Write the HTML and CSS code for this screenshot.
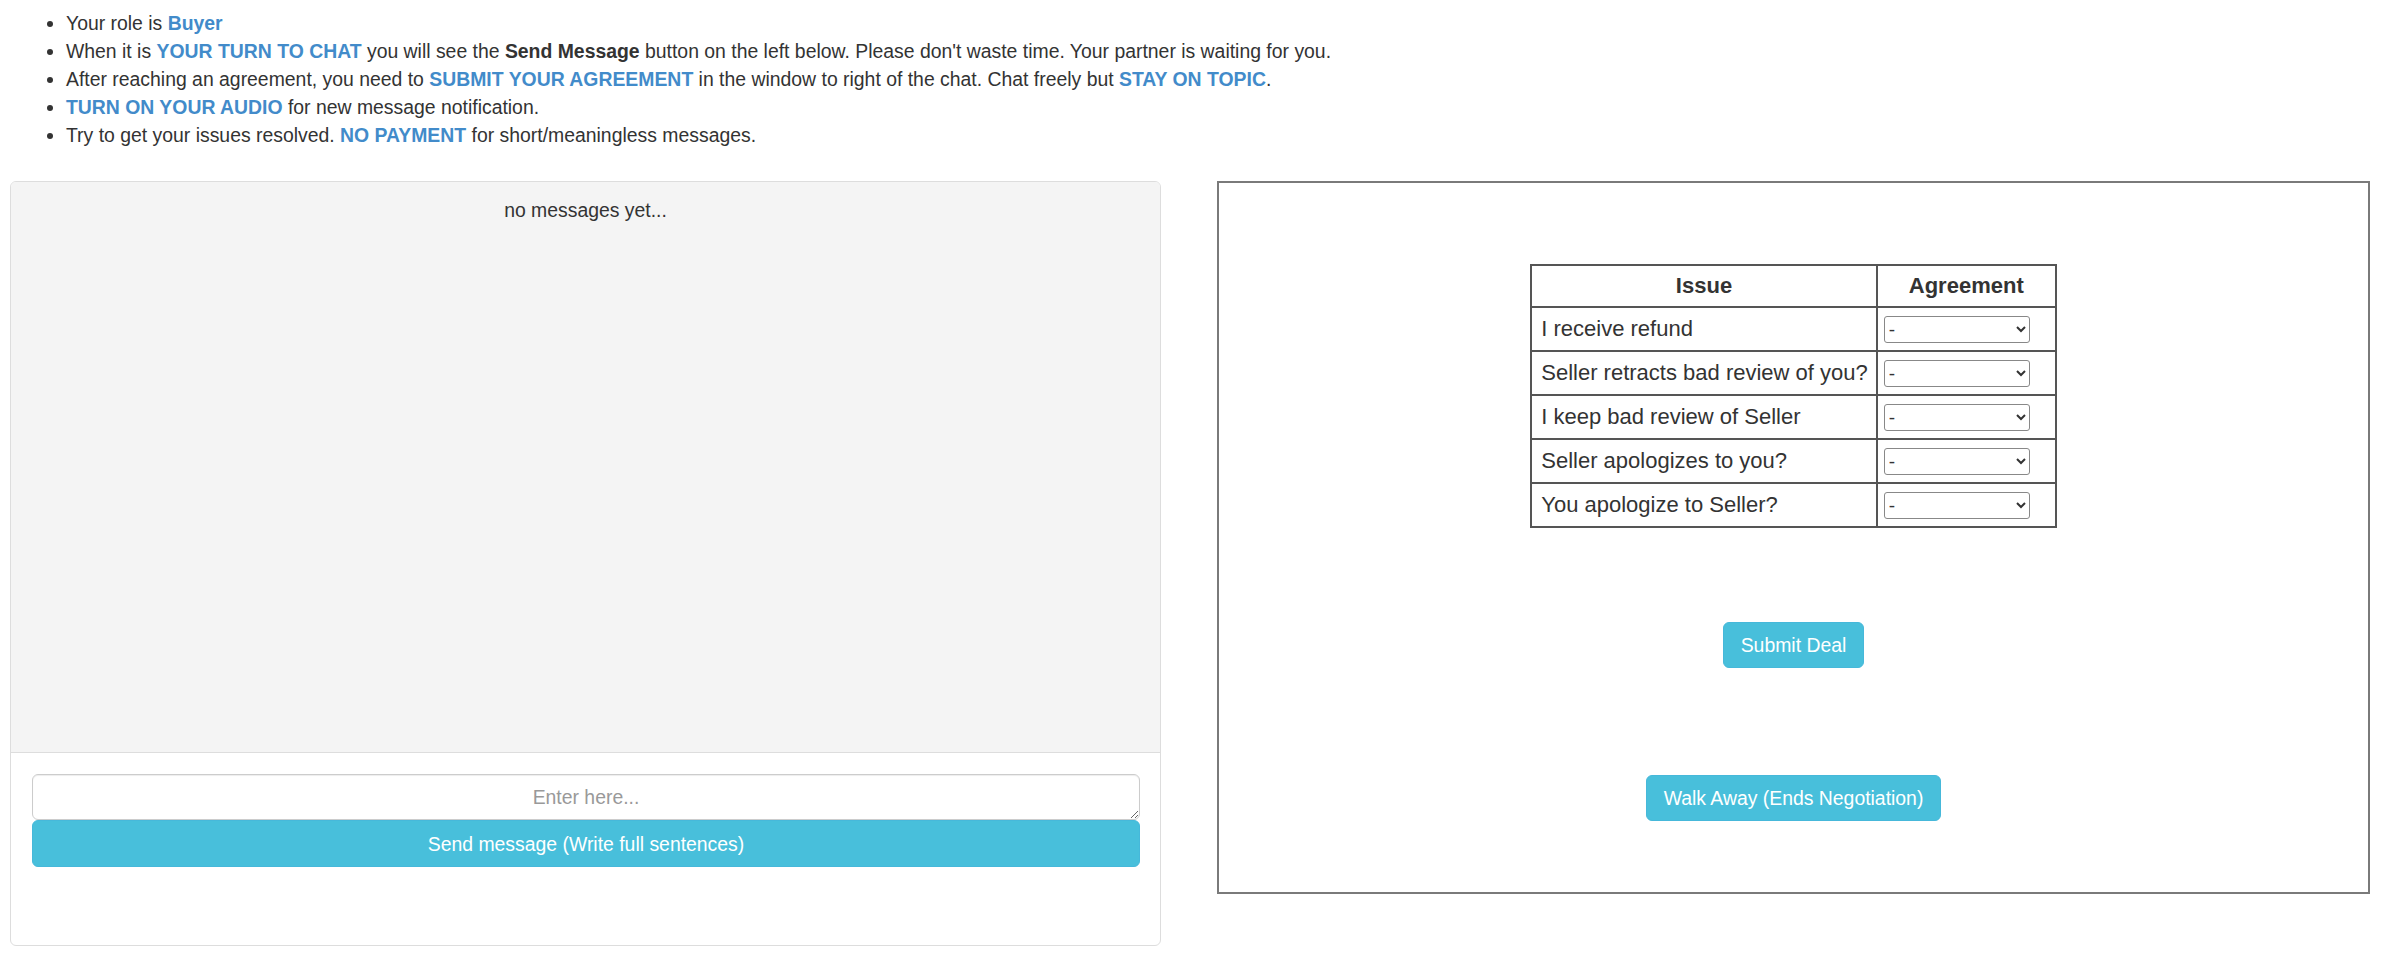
FILE: index.html
```html
<!DOCTYPE html>
<html>
	<head>
		<meta charset="UTF-8">
		<title>Negotiation Chat</title>
		<link rel="stylesheet" href="styles.css">
	</head>
	<body>
		<ul class="rules">
			<li>Your role is <span class="hl">Buyer</span></li>
			<li>When it is <span class="hl">YOUR TURN TO CHAT</span> you will see the <b>Send Message</b> button on the left below. Please don't waste time. Your partner is waiting for you.</li>
			<li>After reaching an agreement, you need to <span class="hl">SUBMIT YOUR AGREEMENT</span> in the window to right of the chat. Chat freely but <span class="hl">STAY ON TOPIC</span>.</li>
			<li><span class="hl">TURN ON YOUR AUDIO</span> for new message notification.</li>
			<li>Try to get your issues resolved. <span class="hl">NO PAYMENT</span> for short/meaningless messages.</li>
		</ul>
		<div class="row">
			<div class="chat">
				<div class="messages">no messages yet...</div>
				<div class="composer">
					<textarea class="entry" placeholder="Enter here..."></textarea>
					<button class="btn btn-wide">Send message (Write full sentences)</button>
				</div>
			</div>
			<div class="deal">
				<table class="issues">
					<tr>
						<th>Issue</th>
						<th class="agree">Agreement</th>
					</tr>
					<tr>
						<td>I receive refund</td>
						<td class="choice"><select><option>-</option></select></td>
					</tr>
					<tr>
						<td>Seller retracts bad review of you?</td>
						<td class="choice"><select><option>-</option></select></td>
					</tr>
					<tr>
						<td>I keep bad review of Seller</td>
						<td class="choice"><select><option>-</option></select></td>
					</tr>
					<tr>
						<td>Seller apologizes to you?</td>
						<td class="choice"><select><option>-</option></select></td>
					</tr>
					<tr>
						<td>You apologize to Seller?</td>
						<td class="choice"><select><option>-</option></select></td>
					</tr>
				</table>
				<div class="submit"><button class="btn">Submit Deal</button></div>
				<div class="walk"><button class="btn">Walk Away (Ends Negotiation)</button></div>
			</div>
		</div>
	</body>
</html>
```

FILE: styles.css
```css
body {
	margin: 0;
	padding: 0 22px 0 10px;
	font-family: "Liberation Sans", Arial, sans-serif;
	font-size: 19.4px;
	line-height: 28px;
	color: #333;
	background: #fff;
}
ul.rules {
	margin: 9px 0 0 0;
	padding-left: 56px;
}
.hl {
	color: #428bca;
	font-weight: bold;
}
.row {
	display: flex;
	align-items: flex-start;
	gap: 56px;
	margin-top: 32px;
}
.chat {
	flex: 1;
	border: 1px solid #ddd;
	border-radius: 6px;
	overflow: hidden;
}
.messages {
	background-color: #f4f4f4;
	height: 542px;
	padding: 14px;
	text-align: center;
	border-bottom: 1px solid #ddd;
}
.composer {
	padding: 21px 20px 78px 21px;
}
textarea.entry {
	display: block;
	box-sizing: border-box;
	width: 100%;
	height: 46px;
	margin: 0;
	padding: 8px 12px;
	border: 1px solid #ccc;
	border-radius: 6px;
	font-family: inherit;
	font-size: 19.4px;
	line-height: 28px;
	text-align: center;
	color: #555;
	box-shadow: inset 0 1px 1px rgba(0,0,0,.075);
}
textarea.entry::placeholder {
	color: #999;
}
.btn {
	font-family: inherit;
	font-size: 19.4px;
	line-height: 28px;
	padding: 8px 17px;
	color: #fff;
	background-color: #48bfdb;
	border: 1px solid #46b8da;
	border-radius: 6px;
	cursor: pointer;
}
.btn-wide {
	display: block;
	width: 100%;
	height: 47px;
	padding: 0 17px;
}
.deal {
	flex: 1;
	border: 2px solid #7a7a7a;
	padding: 81px 0 71px 0;
	text-align: center;
}
table.issues {
	margin: 0 auto;
	border-collapse: collapse;
	font-size: 22px;
	line-height: 28px;
	text-align: left;
}
table.issues th,
table.issues td {
	border: 2px solid #555;
	padding: 7px 8px 7px 9px;
}
table.issues th {
	text-align: center;
	padding: 6px 8px;
}
table.issues th.agree {
	width: 161px;
}
table.issues td.choice {
	padding: 0 8px 0 6px;
}
select {
	display: block;
	width: 146px;
	height: 27px;
	font-family: inherit;
	font-size: 19px;
	color: #333;
	background: #fff;
	border: 1px solid #888;
	border-radius: 3px;
}
.submit {
	margin-top: 94px;
}
.walk {
	margin-top: 107px;
}
```
